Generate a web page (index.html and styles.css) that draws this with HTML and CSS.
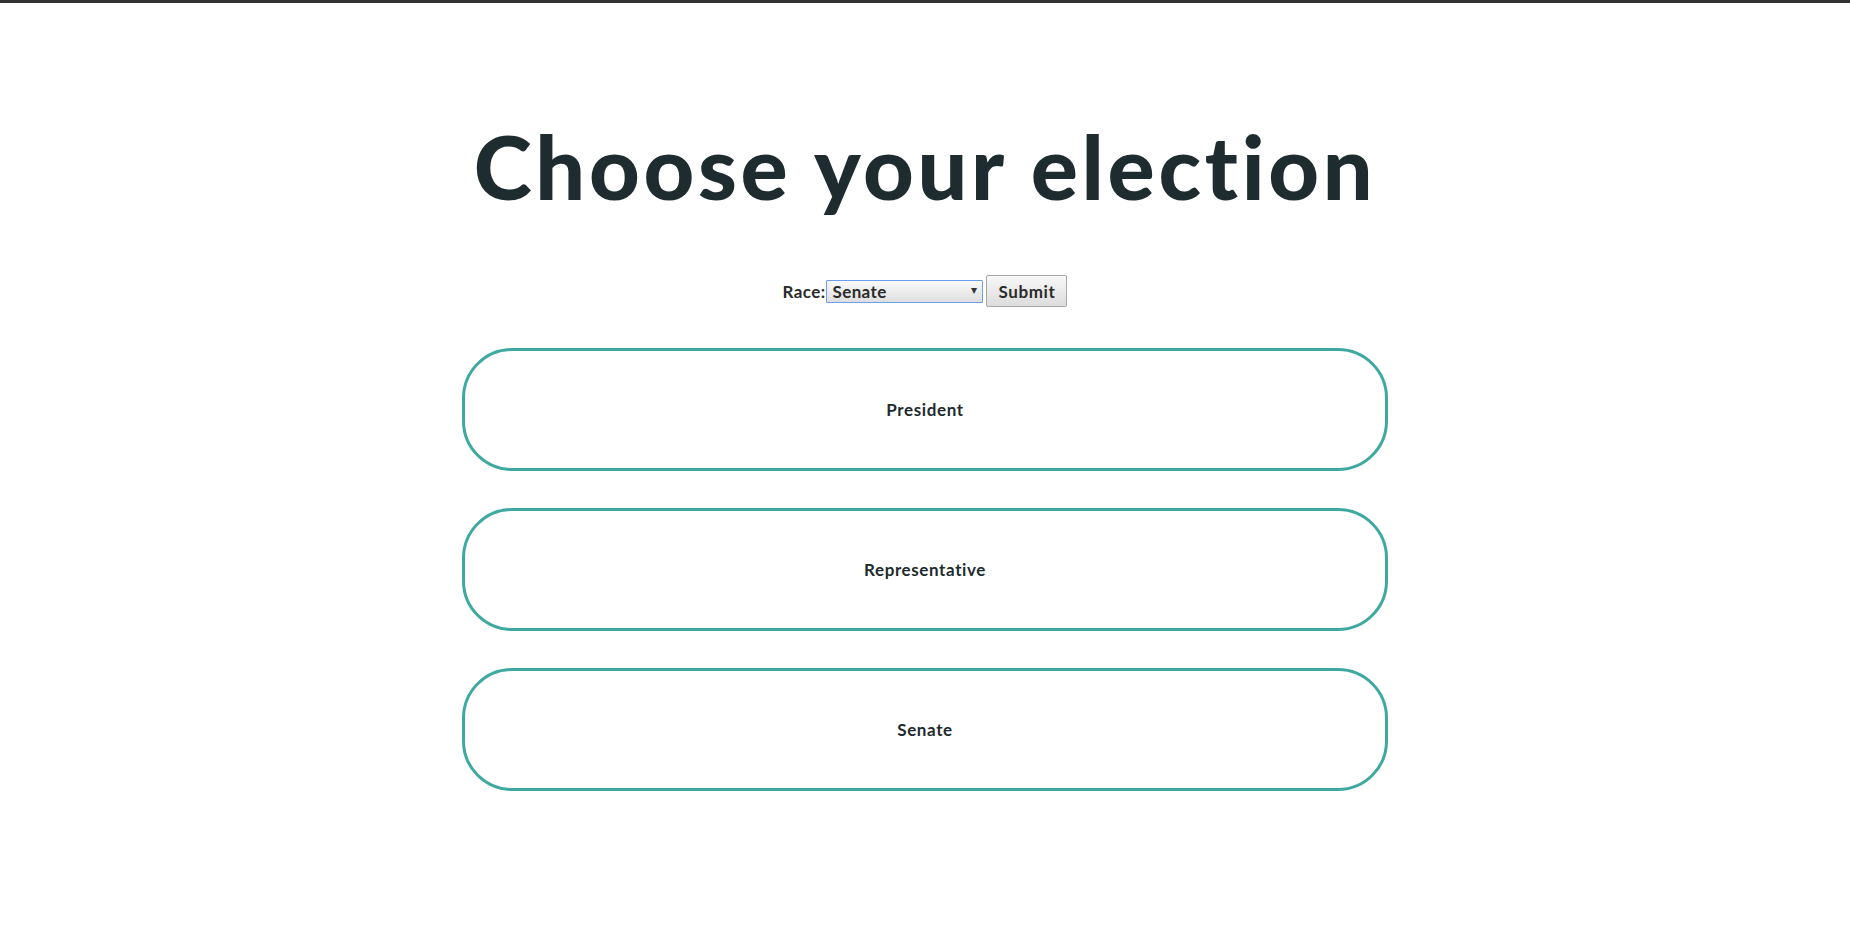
FILE: index.html
```html
<!DOCTYPE html>
<html lang="en">
<head>
<meta charset="utf-8">
<title>Choose your election</title>
<link rel="stylesheet" href="styles.css">
</head>
<body>
<div class="page">
  <h1 class="title">Choose your election</h1>
  <form class="race-form">
    <label class="race-label" for="race">Race:</label>
    <span class="select-wrap">
      <select id="race" class="race-select">
        <option>President</option>
        <option>Representative</option>
        <option selected>Senate</option>
      </select>
      <span class="select-arrow">▾</span>
    </span>
    <button type="button" class="submit-btn">Submit</button>
  </form>
  <div class="choices">
    <div class="choice">President</div>
    <div class="choice">Representative</div>
    <div class="choice">Senate</div>
  </div>
</div>
</body>
</html>
```

FILE: styles.css
```css
html, body {
  margin: 0;
  padding: 0;
  background: #ffffff;
}
body {
  border-top: 3px solid #323232;
  font-family: "Lato", "Noto Sans", "Liberation Sans", sans-serif;
  color: #1e2b2f;
}
.page {
  display: flex;
  flex-direction: column;
  align-items: center;
}
.title {
  margin: 119px 0 0 0;
  font-size: 88px;
  line-height: 88px;
  font-weight: 900;
  letter-spacing: 3.7px;
  color: #1e2b2f;
}
.race-form {
  margin-top: 65px;
  display: flex;
  align-items: center;
  height: 32px;
}
.race-label {
  font-size: 17px;
  font-weight: 700;
  letter-spacing: 0.4px;
  color: #2a2a2a;
}
.select-wrap {
  position: relative;
  display: inline-block;
  margin-left: 1px;
}
.race-select {
  appearance: none;
  -webkit-appearance: none;
  width: 157px;
  height: 23px;
  padding: 0 0 0 5px;
  border: 1px solid #6d9eeb;
  border-radius: 1px;
  background: linear-gradient(#fafafa, #dedede);
  font-family: inherit;
  font-size: 17px;
  font-weight: 700;
  letter-spacing: 0.4px;
  color: #2a2a2a;
  outline: none;
  display: block;
}
.select-arrow {
  position: absolute;
  right: 6px;
  top: 2px;
  font-size: 12px;
  color: #333;
  pointer-events: none;
}
.submit-btn {
  margin-left: 3px;
  width: 81px;
  height: 32px;
  border: 1px solid #a9a9a9;
  border-radius: 2px;
  background: linear-gradient(#f8f8f8, #dcdcdc);
  font-family: inherit;
  font-size: 17px;
  font-weight: 700;
  letter-spacing: 0.6px;
  color: #2a2a2a;
  padding: 0;
}
.choices {
  margin-top: 41px;
  display: flex;
  flex-direction: column;
  gap: 37px;
  width: 926px;
}
.choice {
  height: 117px;
  border: 3px solid #3ea9a0;
  border-radius: 50px;
  display: flex;
  align-items: center;
  justify-content: center;
  font-size: 17px;
  font-weight: 700;
  letter-spacing: 0.6px;
  color: #1e2b2f;
}
```
